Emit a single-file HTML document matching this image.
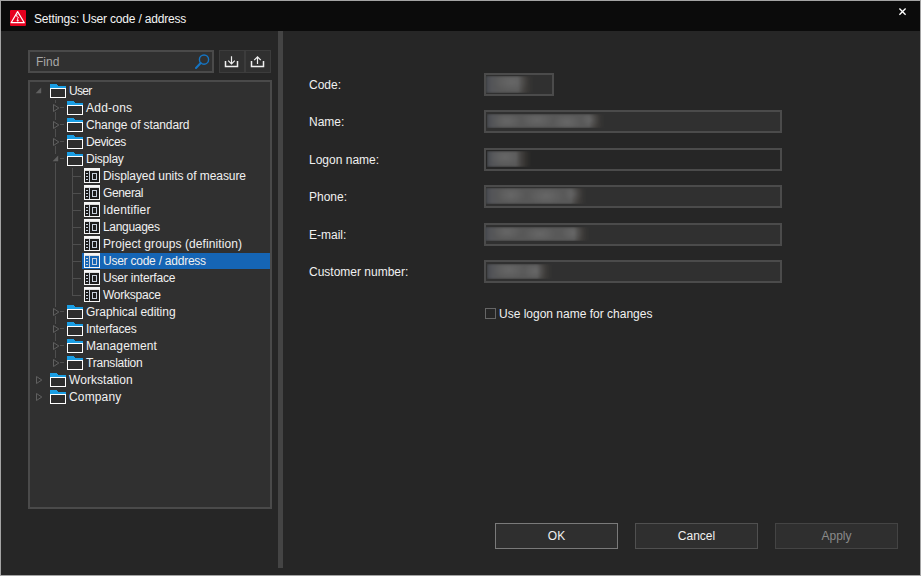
<!DOCTYPE html>
<html><head><meta charset="utf-8">
<style>
html,body{margin:0;padding:0;}
body{width:921px;height:576px;position:relative;overflow:hidden;background:#a4a4a4;font-family:"Liberation Sans",sans-serif;font-size:12px;color:#f0f0f0;}
.abs{position:absolute;}
#title{left:1px;top:1px;width:919px;height:30px;background:#0b0b0b;}
#body{left:1px;top:31px;width:919px;height:544px;background:#262626;}
#leftbg{left:1px;top:31px;width:277px;height:544px;background:#2a2a2a;}
#split{left:278px;top:31px;width:5px;height:537px;background:#444;}
#splitd{left:283px;top:31px;width:1px;height:544px;background:#202020;}
.t{position:absolute;white-space:nowrap;line-height:14px;}
.find{left:28px;top:50px;width:182px;height:19px;border:2px solid #4a4a4a;background:#303030;}
.tbtn{top:50px;width:24px;height:21px;border:1px solid #3c3c3c;background:#303030;}
.tree{left:28px;top:80px;width:240px;height:425px;border:2px solid #4a4a4a;background:#303030;}
.fld{left:484px;width:294px;height:19px;border:2px solid #4b4b4b;background:#303030;}
.blur{position:absolute;filter:blur(0.8px);}
.lbl{left:309px;}
.btn{top:523px;width:121px;height:24px;border:1px solid #505050;background:#2f2f2f;text-align:center;line-height:24px;}
.sel{left:82px;top:253px;width:188px;height:16px;background:#1565b5;}
</style></head><body>
<div class="abs" id="title"></div>
<div class="abs" id="body"></div>
<div class="abs" id="split"></div>

<!-- title icon -->
<svg class="abs" style="left:10px;top:10px" width="16" height="16" viewBox="0 0 16 16">
<rect x="0" y="0" width="16" height="16" rx="1" fill="#e6001e"/>
<path d="M7.6 1.6 L14.3 12.7 H1.1 Z" fill="none" stroke="#fff" stroke-width="1.2" stroke-linejoin="round"/>
<path d="M7.2 4.2 L6.4 6.2 L8.4 7.4 L7.7 8.4 V11.4 M6.9 10.2 L7.7 11.2 L8.5 10.2" fill="none" stroke="#fff" stroke-width="0.9"/>
</svg>
<div class="t" style="left:34px;top:12px;color:#f4f4f4;letter-spacing:-0.18px">Settings: User code / address</div>
<svg class="abs" style="left:898px;top:7px" width="10" height="10" viewBox="0 0 10 10">
<path d="M1.4 1.5 L7.6 7.7 M7.6 1.5 L1.4 7.7" stroke="#fff" stroke-width="1.35"/>
</svg>

<!-- find -->
<div class="abs find"></div>
<div class="t" style="left:36px;top:55px;color:#a8a8a8">Find</div>
<svg class="abs" style="left:192px;top:52px" width="20" height="20" viewBox="0 0 20 20">
<circle cx="12" cy="7.6" r="4.6" fill="none" stroke="#1574c2" stroke-width="1.4"/>
<path d="M8.7 11 L4 16" stroke="#1574c2" stroke-width="2" stroke-linecap="round"/>
</svg>
<div class="abs tbtn" style="left:219px"></div>
<div class="abs tbtn" style="left:245px"></div>
<svg class="abs" style="left:219px;top:50px" width="52" height="23" viewBox="0 0 52 23">
<path d="M6.5 11 V16.5 H18.5 V11" fill="none" stroke="#f0f0f0" stroke-width="1.5"/>
<path d="M12.5 6.2 V14 M9.2 10.7 L12.5 14 L15.8 10.7" fill="none" stroke="#f0f0f0" stroke-width="1.2"/>
<path d="M32.5 11 V16.5 H44.5 V11" fill="none" stroke="#f0f0f0" stroke-width="1.5"/>
<path d="M38.5 14 V6.8 M35.2 10.1 L38.5 6.8 L41.8 10.1" fill="none" stroke="#f0f0f0" stroke-width="1.2"/>
</svg>

<!-- tree -->
<div class="abs tree"></div>

<svg class="abs" style="left:0;top:0" width="300" height="420" viewBox="0 0 300 420" shape-rendering="crispEdges">
<rect x="82" y="253" width="188" height="16" fill="#1565b5"/>
<rect x="55" y="100" width="1" height="263" fill="#4e4e4e"/>
<rect x="72" y="168" width="1" height="128" fill="#4e4e4e"/>
<rect x="60" y="107" width="4" height="1" fill="#4e4e4e"/>
<rect x="60" y="124" width="4" height="1" fill="#4e4e4e"/>
<rect x="60" y="141" width="4" height="1" fill="#4e4e4e"/>
<rect x="60" y="158" width="4" height="1" fill="#4e4e4e"/>
<rect x="73" y="176" width="8" height="1" fill="#4e4e4e"/>
<rect x="73" y="193" width="8" height="1" fill="#4e4e4e"/>
<rect x="73" y="210" width="8" height="1" fill="#4e4e4e"/>
<rect x="73" y="227" width="8" height="1" fill="#4e4e4e"/>
<rect x="73" y="244" width="8" height="1" fill="#4e4e4e"/>
<rect x="73" y="261" width="8" height="1" fill="#4e4e4e"/>
<rect x="73" y="278" width="8" height="1" fill="#4e4e4e"/>
<rect x="73" y="295" width="8" height="1" fill="#4e4e4e"/>
<rect x="60" y="311" width="4" height="1" fill="#4e4e4e"/>
<rect x="60" y="328" width="4" height="1" fill="#4e4e4e"/>
<rect x="60" y="345" width="4" height="1" fill="#4e4e4e"/>
<rect x="60" y="362" width="4" height="1" fill="#4e4e4e"/>
</svg>
<svg class="abs" style="left:0;top:0" width="300" height="420" viewBox="0 0 300 420">

<path d="M41.2 87.6 V93.2 H35.6 Z" fill="#606060"/>
<rect x="52" y="103" width="8" height="9" fill="#303030"/>
<path d="M53.5 104.5 V111.5 L58.8 108 Z" fill="none" stroke="#606060" stroke-width="1"/>
<rect x="52" y="120" width="8" height="9" fill="#303030"/>
<path d="M53.5 121.5 V128.5 L58.8 125 Z" fill="none" stroke="#606060" stroke-width="1"/>
<rect x="52" y="137" width="8" height="9" fill="#303030"/>
<path d="M53.5 138.5 V145.5 L58.8 142 Z" fill="none" stroke="#606060" stroke-width="1"/>
<rect x="52" y="154" width="8" height="9" fill="#303030"/>
<path d="M58.2 155.6 V161.2 H52.6 Z" fill="#606060"/>
<rect x="52" y="307" width="8" height="9" fill="#303030"/>
<path d="M53.5 308.5 V315.5 L58.8 312 Z" fill="none" stroke="#606060" stroke-width="1"/>
<rect x="52" y="324" width="8" height="9" fill="#303030"/>
<path d="M53.5 325.5 V332.5 L58.8 329 Z" fill="none" stroke="#606060" stroke-width="1"/>
<rect x="52" y="341" width="8" height="9" fill="#303030"/>
<path d="M53.5 342.5 V349.5 L58.8 346 Z" fill="none" stroke="#606060" stroke-width="1"/>
<rect x="52" y="358" width="8" height="9" fill="#303030"/>
<path d="M53.5 359.5 V366.5 L58.8 363 Z" fill="none" stroke="#606060" stroke-width="1"/>

<path d="M36.5 376.5 V383.5 L41.8 380 Z" fill="none" stroke="#606060" stroke-width="1"/>

<path d="M36.5 393.5 V400.5 L41.8 397 Z" fill="none" stroke="#606060" stroke-width="1"/>
</svg>
<svg class="abs" style="left:0;top:0" width="300" height="420" viewBox="0 0 300 420" shape-rendering="crispEdges">
<g transform="translate(50 84)"><path d="M0 0 H6 L8 2 H16 V4 H0 Z" fill="#1a9ee4"/><rect x="0" y="4" width="16" height="10" fill="#fff"/><rect x="1" y="5" width="14" height="8" fill="#2d2d2d"/></g>
<g transform="translate(67 101)"><path d="M0 0 H6 L8 2 H16 V4 H0 Z" fill="#1a9ee4"/><rect x="0" y="4" width="16" height="10" fill="#fff"/><rect x="1" y="5" width="14" height="8" fill="#2d2d2d"/></g>
<g transform="translate(67 118)"><path d="M0 0 H6 L8 2 H16 V4 H0 Z" fill="#1a9ee4"/><rect x="0" y="4" width="16" height="10" fill="#fff"/><rect x="1" y="5" width="14" height="8" fill="#2d2d2d"/></g>
<g transform="translate(67 135)"><path d="M0 0 H6 L8 2 H16 V4 H0 Z" fill="#1a9ee4"/><rect x="0" y="4" width="16" height="10" fill="#fff"/><rect x="1" y="5" width="14" height="8" fill="#2d2d2d"/></g>
<g transform="translate(67 152)"><path d="M0 0 H6 L8 2 H16 V4 H0 Z" fill="#1a9ee4"/><rect x="0" y="4" width="16" height="10" fill="#fff"/><rect x="1" y="5" width="14" height="8" fill="#2d2d2d"/></g>
<g transform="translate(84 168)"><rect x="0" y="0" width="16" height="15" fill="#f6f6f6"/><rect x="1" y="2" width="14" height="1" fill="#dedede"/><rect x="1" y="3" width="14" height="11" fill="#1c1c1c"/><rect x="2" y="5" width="2" height="1" fill="#c8d0dc"/><rect x="2" y="8" width="2" height="1" fill="#c8d0dc"/><rect x="2" y="11" width="2" height="1" fill="#c8d0dc"/><rect x="5" y="3" width="1" height="11" fill="#c8d0dc"/><rect x="8" y="5" width="5" height="7" fill="#c8d0dc"/><rect x="9" y="6" width="3" height="5" fill="#1c1c1c"/></g>
<g transform="translate(84 185)"><rect x="0" y="0" width="16" height="15" fill="#f6f6f6"/><rect x="1" y="2" width="14" height="1" fill="#dedede"/><rect x="1" y="3" width="14" height="11" fill="#1c1c1c"/><rect x="2" y="5" width="2" height="1" fill="#c8d0dc"/><rect x="2" y="8" width="2" height="1" fill="#c8d0dc"/><rect x="2" y="11" width="2" height="1" fill="#c8d0dc"/><rect x="5" y="3" width="1" height="11" fill="#c8d0dc"/><rect x="8" y="5" width="5" height="7" fill="#c8d0dc"/><rect x="9" y="6" width="3" height="5" fill="#1c1c1c"/></g>
<g transform="translate(84 202)"><rect x="0" y="0" width="16" height="15" fill="#f6f6f6"/><rect x="1" y="2" width="14" height="1" fill="#dedede"/><rect x="1" y="3" width="14" height="11" fill="#1c1c1c"/><rect x="2" y="5" width="2" height="1" fill="#c8d0dc"/><rect x="2" y="8" width="2" height="1" fill="#c8d0dc"/><rect x="2" y="11" width="2" height="1" fill="#c8d0dc"/><rect x="5" y="3" width="1" height="11" fill="#c8d0dc"/><rect x="8" y="5" width="5" height="7" fill="#c8d0dc"/><rect x="9" y="6" width="3" height="5" fill="#1c1c1c"/></g>
<g transform="translate(84 219)"><rect x="0" y="0" width="16" height="15" fill="#f6f6f6"/><rect x="1" y="2" width="14" height="1" fill="#dedede"/><rect x="1" y="3" width="14" height="11" fill="#1c1c1c"/><rect x="2" y="5" width="2" height="1" fill="#c8d0dc"/><rect x="2" y="8" width="2" height="1" fill="#c8d0dc"/><rect x="2" y="11" width="2" height="1" fill="#c8d0dc"/><rect x="5" y="3" width="1" height="11" fill="#c8d0dc"/><rect x="8" y="5" width="5" height="7" fill="#c8d0dc"/><rect x="9" y="6" width="3" height="5" fill="#1c1c1c"/></g>
<g transform="translate(84 236)"><rect x="0" y="0" width="16" height="15" fill="#f6f6f6"/><rect x="1" y="2" width="14" height="1" fill="#dedede"/><rect x="1" y="3" width="14" height="11" fill="#1c1c1c"/><rect x="2" y="5" width="2" height="1" fill="#c8d0dc"/><rect x="2" y="8" width="2" height="1" fill="#c8d0dc"/><rect x="2" y="11" width="2" height="1" fill="#c8d0dc"/><rect x="5" y="3" width="1" height="11" fill="#c8d0dc"/><rect x="8" y="5" width="5" height="7" fill="#c8d0dc"/><rect x="9" y="6" width="3" height="5" fill="#1c1c1c"/></g>
<g transform="translate(84 253)"><rect x="0" y="0" width="16" height="15" fill="#f6f6f6"/><rect x="1" y="2" width="14" height="1" fill="#dedede"/><rect x="1" y="3" width="14" height="11" fill="#1565b5"/><rect x="2" y="5" width="2" height="1" fill="#c8d0dc"/><rect x="2" y="8" width="2" height="1" fill="#c8d0dc"/><rect x="2" y="11" width="2" height="1" fill="#c8d0dc"/><rect x="5" y="3" width="1" height="11" fill="#c8d0dc"/><rect x="8" y="5" width="5" height="7" fill="#c8d0dc"/><rect x="9" y="6" width="3" height="5" fill="#1565b5"/></g>
<g transform="translate(84 270)"><rect x="0" y="0" width="16" height="15" fill="#f6f6f6"/><rect x="1" y="2" width="14" height="1" fill="#dedede"/><rect x="1" y="3" width="14" height="11" fill="#1c1c1c"/><rect x="2" y="5" width="2" height="1" fill="#c8d0dc"/><rect x="2" y="8" width="2" height="1" fill="#c8d0dc"/><rect x="2" y="11" width="2" height="1" fill="#c8d0dc"/><rect x="5" y="3" width="1" height="11" fill="#c8d0dc"/><rect x="8" y="5" width="5" height="7" fill="#c8d0dc"/><rect x="9" y="6" width="3" height="5" fill="#1c1c1c"/></g>
<g transform="translate(84 287)"><rect x="0" y="0" width="16" height="15" fill="#f6f6f6"/><rect x="1" y="2" width="14" height="1" fill="#dedede"/><rect x="1" y="3" width="14" height="11" fill="#1c1c1c"/><rect x="2" y="5" width="2" height="1" fill="#c8d0dc"/><rect x="2" y="8" width="2" height="1" fill="#c8d0dc"/><rect x="2" y="11" width="2" height="1" fill="#c8d0dc"/><rect x="5" y="3" width="1" height="11" fill="#c8d0dc"/><rect x="8" y="5" width="5" height="7" fill="#c8d0dc"/><rect x="9" y="6" width="3" height="5" fill="#1c1c1c"/></g>
<g transform="translate(67 305)"><path d="M0 0 H6 L8 2 H16 V4 H0 Z" fill="#1a9ee4"/><rect x="0" y="4" width="16" height="10" fill="#fff"/><rect x="1" y="5" width="14" height="8" fill="#2d2d2d"/></g>
<g transform="translate(67 322)"><path d="M0 0 H6 L8 2 H16 V4 H0 Z" fill="#1a9ee4"/><rect x="0" y="4" width="16" height="10" fill="#fff"/><rect x="1" y="5" width="14" height="8" fill="#2d2d2d"/></g>
<g transform="translate(67 339)"><path d="M0 0 H6 L8 2 H16 V4 H0 Z" fill="#1a9ee4"/><rect x="0" y="4" width="16" height="10" fill="#fff"/><rect x="1" y="5" width="14" height="8" fill="#2d2d2d"/></g>
<g transform="translate(67 356)"><path d="M0 0 H6 L8 2 H16 V4 H0 Z" fill="#1a9ee4"/><rect x="0" y="4" width="16" height="10" fill="#fff"/><rect x="1" y="5" width="14" height="8" fill="#2d2d2d"/></g>
<g transform="translate(50 373)"><path d="M0 0 H6 L8 2 H16 V4 H0 Z" fill="#1a9ee4"/><rect x="0" y="4" width="16" height="10" fill="#fff"/><rect x="1" y="5" width="14" height="8" fill="#2d2d2d"/></g>
<g transform="translate(50 390)"><path d="M0 0 H6 L8 2 H16 V4 H0 Z" fill="#1a9ee4"/><rect x="0" y="4" width="16" height="10" fill="#fff"/><rect x="1" y="5" width="14" height="8" fill="#2d2d2d"/></g>
</svg>
<div class="t" style="left:69px;top:84px;letter-spacing:-0.7px">User</div>
<div class="t" style="left:86px;top:101px;letter-spacing:0.233px">Add-ons</div>
<div class="t" style="left:86px;top:118px;letter-spacing:-0.112px">Change of standard</div>
<div class="t" style="left:86px;top:135px;letter-spacing:-0.417px">Devices</div>
<div class="t" style="left:86px;top:152px;letter-spacing:-0.25px">Display</div>
<div class="t" style="left:103px;top:169px;letter-spacing:-0.068px">Displayed units of measure</div>
<div class="t" style="left:103px;top:186px;letter-spacing:-0.367px">General</div>
<div class="t" style="left:103px;top:203px;letter-spacing:0.156px">Identifier</div>
<div class="t" style="left:103px;top:220px;letter-spacing:-0.312px">Languages</div>
<div class="t" style="left:103px;top:237px;letter-spacing:0.085px">Project groups (definition)</div>
<div class="t" style="left:103px;top:254px;letter-spacing:-0.239px">User code / address</div>
<div class="t" style="left:103px;top:271px;letter-spacing:-0.169px">User interface</div>
<div class="t" style="left:103px;top:288px;letter-spacing:-0.237px">Workspace</div>
<div class="t" style="left:86px;top:305px;letter-spacing:-0.031px">Graphical editing</div>
<div class="t" style="left:86px;top:322px;letter-spacing:-0.211px">Interfaces</div>
<div class="t" style="left:86px;top:339px;letter-spacing:0.089px">Management</div>
<div class="t" style="left:86px;top:356px;letter-spacing:-0.22px">Translation</div>
<div class="t" style="left:69px;top:373px;letter-spacing:0.06px">Workstation</div>
<div class="t" style="left:69px;top:390px;letter-spacing:0.15px">Company</div>

<!-- right labels -->
<div class="t lbl" style="top:78px">Code:</div>
<div class="t lbl" style="top:115px">Name:</div>
<div class="t lbl" style="top:153px">Logon name:</div>
<div class="t lbl" style="top:190px">Phone:</div>
<div class="t lbl" style="top:228px">E-mail:</div>
<div class="t lbl" style="top:265px">Customer number:</div>

<div class="abs fld" style="top:73px;width:66px;background:#303030"></div>
<div class="blur" style="left:486px;top:76px;width:50px;height:17px;background:radial-gradient(18px 10px at 26px 6px,rgba(115,115,115,0.55),rgba(115,115,115,0)),linear-gradient(90deg,#474a4f 0px,#545558 6px,#585858 14px,#595959 32px,rgba(80,75,70,0.8) 41px,rgba(48,48,48,0) 50px);-webkit-mask-image:linear-gradient(90deg,#000 32px,transparent 50px)"></div>
<div class="abs fld" style="top:110px;width:294px;background:#303030"></div>
<div class="blur" style="left:487px;top:114px;width:120px;height:14px;background:radial-gradient(14px 8px at 20px 7px,rgba(115,115,115,0.55),rgba(115,115,115,0)),radial-gradient(16px 8px at 50px 6px,rgba(115,115,115,0.55),rgba(115,115,115,0)),radial-gradient(14px 8px at 80px 8px,rgba(115,115,115,0.55),rgba(115,115,115,0)),radial-gradient(10px 7px at 104px 6px,rgba(115,115,115,0.55),rgba(115,115,115,0)),linear-gradient(90deg,#474a4f 0px,#545558 6px,#585858 14px,#595959 102px,rgba(80,75,70,0.8) 111px,rgba(48,48,48,0) 120px);-webkit-mask-image:linear-gradient(90deg,#000 102px,transparent 120px)"></div>
<div class="abs fld" style="top:148px;width:294px;background:#262626"></div>
<div class="blur" style="left:487px;top:151px;width:47px;height:16px;background:radial-gradient(16px 9px at 18px 6px,rgba(115,115,115,0.55),rgba(115,115,115,0)),linear-gradient(90deg,#474a4f 0px,#545558 6px,#585858 14px,#595959 29px,rgba(80,75,70,0.8) 38px,rgba(48,48,48,0) 47px);-webkit-mask-image:linear-gradient(90deg,#000 29px,transparent 47px)"></div>
<div class="abs fld" style="top:185px;width:294px;background:#303030"></div>
<div class="blur" style="left:486px;top:188px;width:103px;height:16px;background:radial-gradient(14px 9px at 25px 7px,rgba(115,115,115,0.55),rgba(115,115,115,0)),radial-gradient(18px 9px at 60px 8px,rgba(115,115,115,0.55),rgba(115,115,115,0)),radial-gradient(10px 8px at 88px 6px,rgba(115,115,115,0.55),rgba(115,115,115,0)),linear-gradient(90deg,#474a4f 0px,#545558 6px,#585858 14px,#595959 85px,rgba(80,75,70,0.8) 94px,rgba(48,48,48,0) 103px);-webkit-mask-image:linear-gradient(90deg,#000 85px,transparent 103px)"></div>
<div class="abs fld" style="top:223px;width:294px;background:#303030"></div>
<div class="blur" style="left:485px;top:227px;width:107px;height:14px;background:radial-gradient(14px 8px at 22px 5px,rgba(115,115,115,0.55),rgba(115,115,115,0)),radial-gradient(16px 8px at 55px 7px,rgba(115,115,115,0.55),rgba(115,115,115,0)),radial-gradient(12px 8px at 88px 6px,rgba(115,115,115,0.55),rgba(115,115,115,0)),linear-gradient(90deg,#474a4f 0px,#545558 6px,#585858 14px,#595959 89px,rgba(80,75,70,0.8) 98px,rgba(48,48,48,0) 107px);-webkit-mask-image:linear-gradient(90deg,#000 89px,transparent 107px)"></div>
<div class="abs fld" style="top:260px;width:294px;background:#303030"></div>
<div class="blur" style="left:487px;top:264px;width:68px;height:15px;background:radial-gradient(16px 9px at 22px 6px,rgba(115,115,115,0.55),rgba(115,115,115,0)),radial-gradient(12px 8px at 48px 7px,rgba(115,115,115,0.55),rgba(115,115,115,0)),linear-gradient(90deg,#474a4f 0px,#545558 6px,#585858 14px,#595959 50px,rgba(80,75,70,0.8) 59px,rgba(48,48,48,0) 68px);-webkit-mask-image:linear-gradient(90deg,#000 50px,transparent 68px)"></div>

<div class="abs" style="left:485px;top:308px;width:9px;height:9px;border:1px solid #666;"></div>
<div class="t" style="left:499px;top:307px">Use logon name for changes</div>

<div class="abs btn" style="left:495px;border-color:#7a7a7a">OK</div>
<div class="abs btn" style="left:635px">Cancel</div>
<div class="abs btn" style="left:775px;border-color:#444;color:#8a8a8a">Apply</div>
</body></html>
